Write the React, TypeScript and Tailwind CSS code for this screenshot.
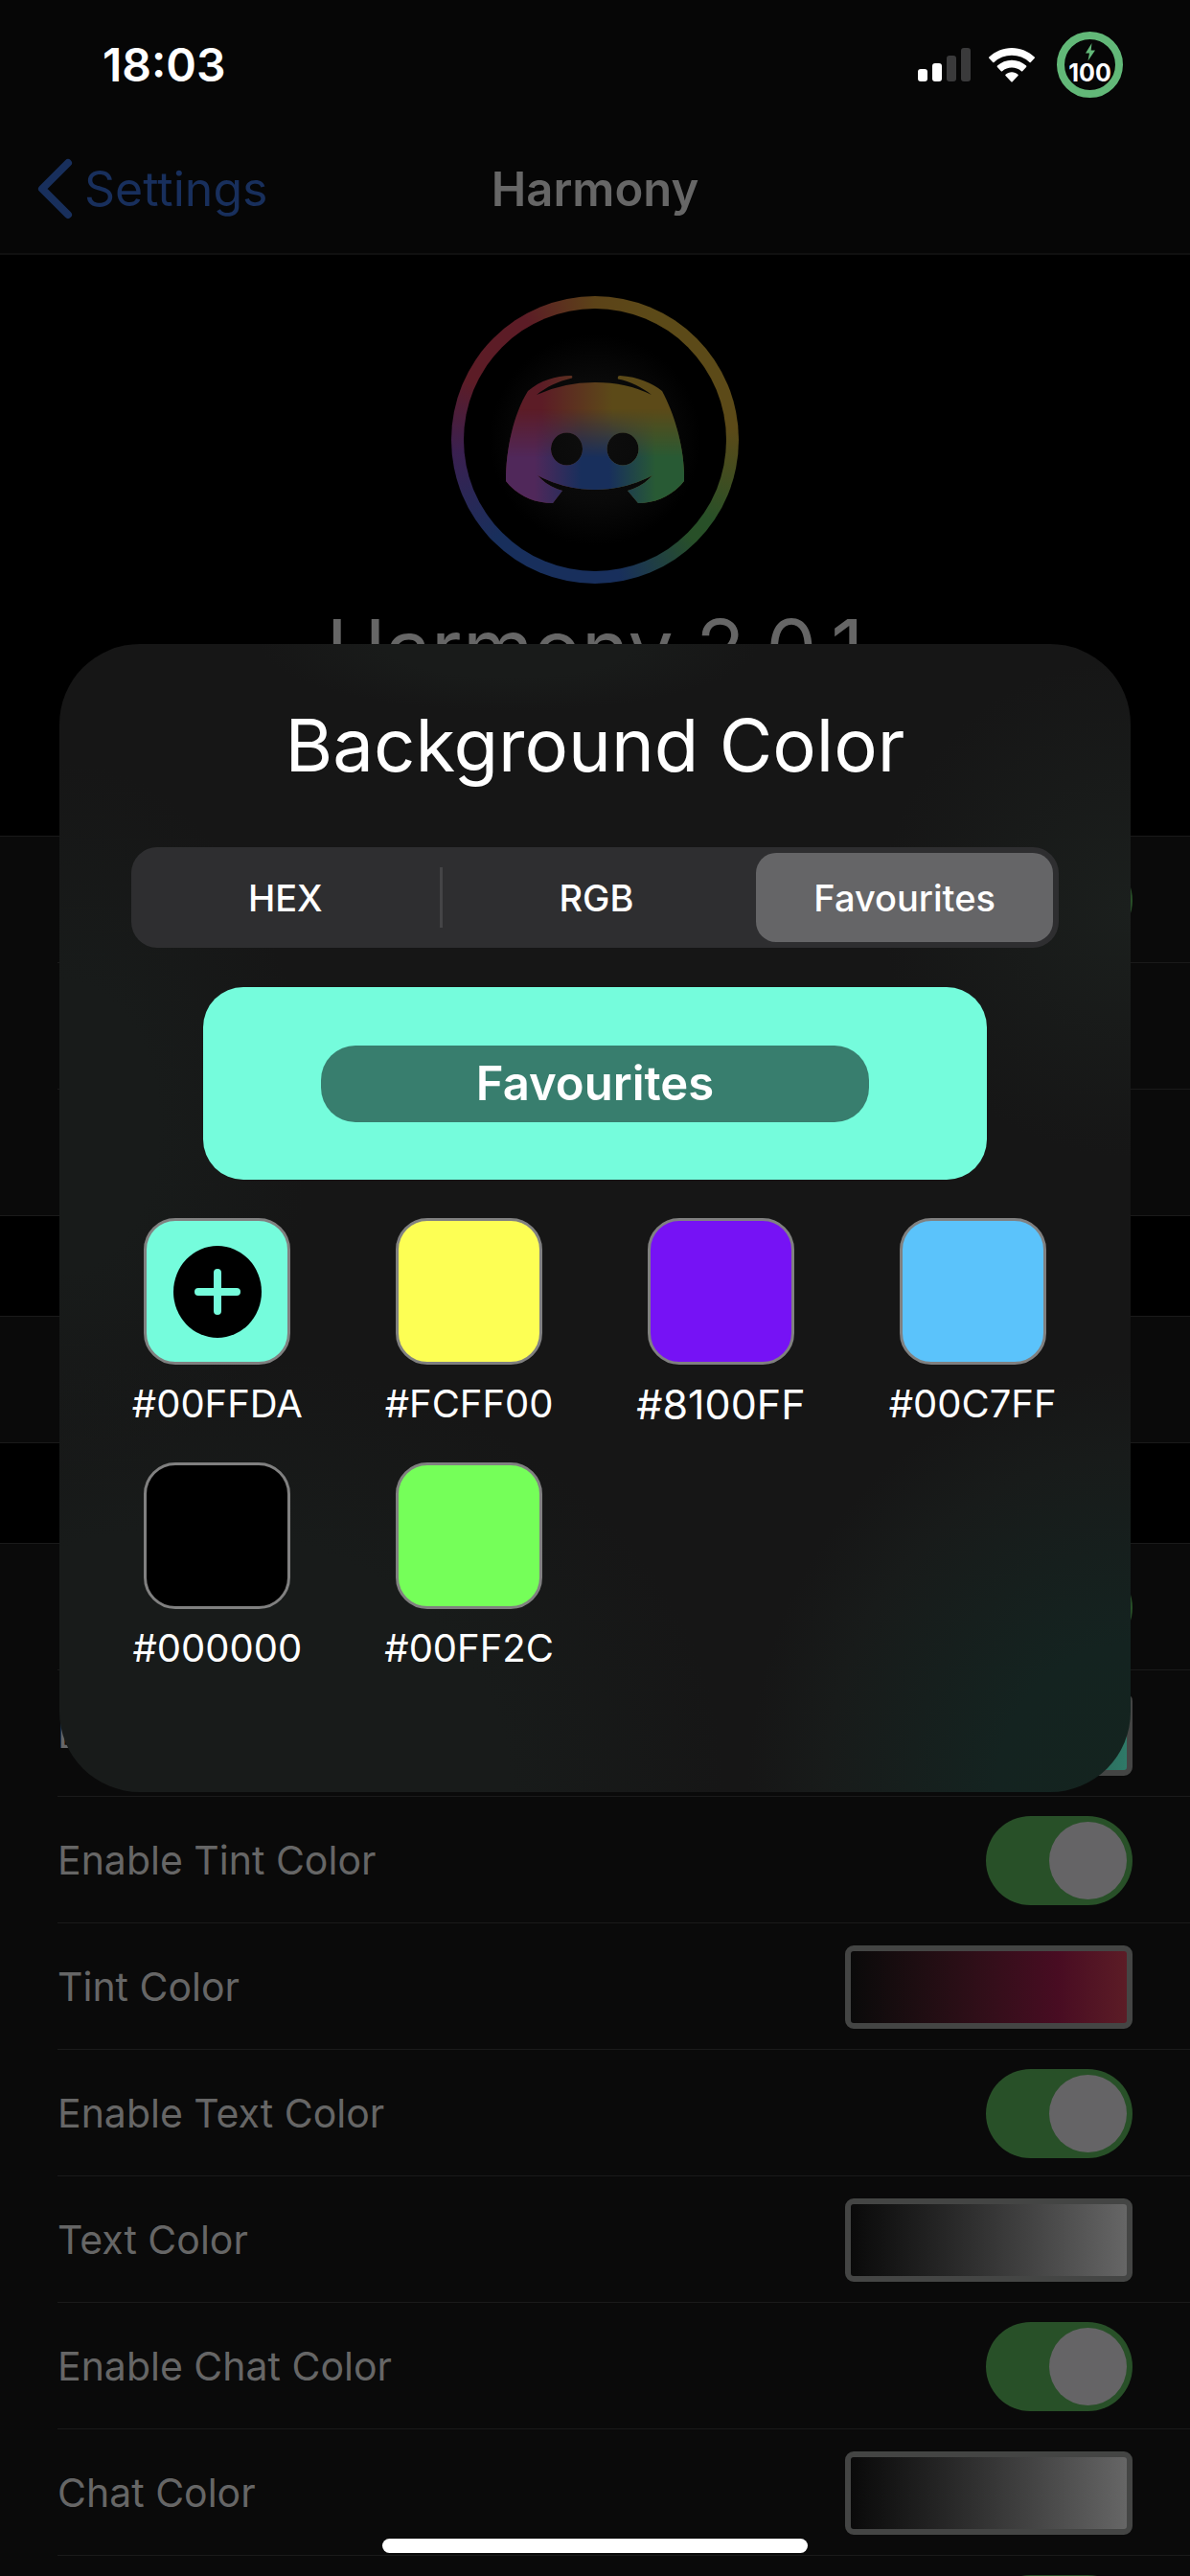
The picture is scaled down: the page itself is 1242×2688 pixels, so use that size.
import React from "react";

const ROW = "flex h-[132px] items-center justify-between pr-[60px]";

function Toggle({ label }: { label: string }) {
  return (
    <label className="relative ml-auto block h-[93px] w-[153px] shrink-0">
      <input
        type="checkbox"
        role="switch"
        aria-label={label}
        defaultChecked
        className="peer block h-full w-full appearance-none rounded-full bg-[#39393d] checked:bg-[#285028]"
      />
      <span className="pointer-events-none absolute left-1.5 top-1.5 size-[81px] rounded-full bg-[#656466] peer-checked:left-[66px]" />
    </label>
  );
}

function Well({ label, gradient }: { label: string; gradient: string }) {
  return (
    <button
      type="button"
      aria-label={label}
      className={"h-[87px] w-[300px] shrink-0 rounded-[9px] border-[6px] border-[#444544] bg-origin-padding " + gradient}
    />
  );
}

type RowData = { id: string; label?: string; gradient?: string; toggle?: boolean };

function Section({ rows }: { rows: RowData[] }) {
  return (
    <ul className="border-y border-[#1a1a1a] bg-[#0a0a0a] pl-[60px]">
      {rows.map((r, i) => (
        <li key={r.id} className={i < rows.length - 1 ? "border-b border-[#1a1a1a]" : ""}>
          <div className={"-mb-px " + ROW}>
            {r.label && <span className="text-[41px] leading-[52px] text-[#666]">{r.label}</span>}
            {r.gradient && <Well label={r.id} gradient={r.gradient} />}
            {r.toggle && <Toggle label={r.id} />}
          </div>
        </li>
      ))}
    </ul>
  );
}

const GREY = "bg-linear-to-r from-[#0a0a0a] to-[#666]";

const GROUPS: RowData[][] = [
  [{ id: "Enabled", toggle: true }, { id: "row-2" }, { id: "row-3" }],
  [{ id: "row-4" }],
  [
    { id: "Enable Background Color", toggle: true },
    { id: "Background Color", label: "Background Color", gradient: "bg-linear-to-r from-[#0a0a0a] to-[#2f7a68]" },
    { id: "Enable Tint Color", label: "Enable Tint Color", toggle: true },
    { id: "Tint Color", label: "Tint Color", gradient: "bg-linear-to-r from-[#0a0a0a] via-[#480c22] via-75% to-[#5c1c26]" },
    { id: "Enable Text Color", label: "Enable Text Color", toggle: true },
    { id: "Text Color", label: "Text Color", gradient: GREY },
    { id: "Enable Chat Color", label: "Enable Chat Color", toggle: true },
    { id: "Chat Color", label: "Chat Color", gradient: GREY },
    { id: "More colors", toggle: true },
  ],
];

function StatusBar() {
  return (
    <div className="absolute inset-x-0 top-0 flex h-[135px] items-center justify-between pl-[107px] pr-[70px]">
      <span className="text-[48px] font-semibold leading-[58px] text-white">18:03</span>
      <div className="flex items-center gap-[19px]">
        <svg width="55" height="36" viewBox="0 0 55 36" aria-label="Signal">
          <rect x="0" y="22" width="10" height="13" rx="3" fill="#fff" />
          <rect x="15" y="16" width="10" height="19" rx="3" fill="#fff" />
          <rect x="30" y="8" width="10" height="27" rx="3" fill="#3a3a3b" />
          <rect x="45" y="0" width="10" height="35" rx="3" fill="#3a3a3b" />
        </svg>
        <svg width="48" height="36" viewBox="0 0 48 36" fill="#fff" aria-label="Wi-Fi">
          <path d="M24 0C33 0 41.500 3.600 47.700 9.500Q48.300 10.200 47.700 10.800L43.800 15Q43.100 15.500 42.500 15A27 27 0 0 0 5.500 15Q4.900 15.500 4.200 15L.3 10.800Q-.3 10.200.3 9.500C6.500 3.600 15 0 24 0Z" />
          <path d="M24 12.800C29.800 12.800 35.100 15 39.100 18.600Q39.700 19.300 39.100 19.900L35.200 24.200Q34.500 24.700 33.900 24.200A15 15 0 0 0 14.100 24.200Q13.500 24.700 12.800 24.200L8.900 19.900Q8.300 19.300 8.900 18.600C12.900 15 18.200 12.800 24 12.800Z" />
          <path d="M24 25.300C26.500 25.300 28.700 26.200 30.500 27.800Q31.100 28.500 30.500 29.100L24.700 35.300Q24 35.900 23.300 35.300L17.500 29.100Q16.900 28.500 17.500 27.800C19.300 26.200 21.500 25.300 24 25.300Z" />
        </svg>
        <div className="ml-1 flex size-[69px] flex-col items-center rounded-full border-[8px] border-[#62b878] pt-1">
          <svg width="12" height="19" viewBox="0 0 12 19" fill="#62b878" className="shrink-0" aria-hidden="true">
            <path d="M7.500 0 1 10.500H5L3.500 18.500 11 7.500H6.700Z" />
          </svg>
          <span className="text-[25px] font-bold leading-6 text-white">100</span>
        </div>
      </div>
    </div>
  );
}

function Logo() {
  return (
    <div className="relative grid size-[300px] place-items-center">
      <div className="absolute inset-0 rounded-full bg-[conic-gradient(#5c4318_0deg,#5c4a18_25deg,#5c4a18_85deg,#285028_125deg,#285028_135deg,#182f5c_170deg,#182f5c_225deg,#3a2050_265deg,#5c1c26_295deg,#5c1c26_330deg,#5c4318_360deg)]" />
      <div className="absolute inset-[13px] rounded-full bg-black bg-[radial-gradient(circle_110px_at_50%_50%,#0e0e0e_0%,#090909_60%,#000_100%)]" />
      <svg width="186" height="134" viewBox="0 0 186 134" className="relative" aria-label="Harmony logo">
        <defs>
          <linearGradient id="top" x1="0" x2="1" y1="0" y2="0">
            <stop offset=".2" stopColor="#5c1c26" />
            <stop offset=".6" stopColor="#5c4a18" />
          </linearGradient>
          <linearGradient id="bottom" x1="0" x2="1" y1="0" y2="0">
            <stop offset=".16" stopColor="#50285a" />
            <stop offset=".42" stopColor="#182f5c" />
            <stop offset=".58" stopColor="#182f5c" />
            <stop offset=".84" stopColor="#285a34" />
          </linearGradient>
          <linearGradient id="fade" x1="0" x2="0" y1="0" y2="1">
            <stop offset=".26" stopColor="#000" />
            <stop offset=".64" stopColor="#fff" />
          </linearGradient>
          <mask id="lower">
            <rect width="186" height="134" fill="url(#fade)" />
          </mask>
          <clipPath id="face" clipPathUnits="userSpaceOnUse">
            <path
              clipRule="evenodd"
              d="M68 0Q70 0 69 2.500C54 6 42 12 32 20Q60 7 93 7T152 20C142 12 130 6 117 3.500Q116 0 119 0C138 1 153 8 163 16C176 40 187 77 186 110C175 124 158 133 138 133L127 120C138 117 147 111 153 104C134 114 114 119 93 119S52 114 33 104C39 111 48 117 59 120L49 133C28 133 11 124 0 110C0 77 8 40 23 16C36 5 52 0 68 0ZM63.500 59.500A16.500 17 0 1 0 63.500 93.500 16.500 17 0 1 0 63.500 59.500ZM122 59.500A16.500 17 0 1 0 122 93.500 16.500 17 0 1 0 122 59.500Z"
            />
          </clipPath>
        </defs>
        <g clipPath="url(#face)">
          <rect width="186" height="134" fill="url(#top)" />
          <rect width="186" height="134" fill="url(#bottom)" mask="url(#lower)" />
        </g>
      </svg>
    </div>
  );
}

type Swatch = { hex: string; bg: string; add?: boolean; large?: boolean };

const SWATCHES: Swatch[] = [
  { hex: "#00FFDA", bg: "bg-[#75fcdc]", add: true },
  { hex: "#FCFF00", bg: "bg-[#fdff54]" },
  { hex: "#8100FF", bg: "bg-[#7612f5]", large: true },
  { hex: "#00C7FF", bg: "bg-[#5bc3fb]" },
  { hex: "#000000", bg: "bg-black" },
  { hex: "#00FF2C", bg: "bg-[#75ff59]" },
];

function ColorDialog() {
  const [tab, setTab] = React.useState("Favourites");
  return (
    <section
      role="dialog"
      aria-labelledby="dialog-title"
      className="absolute inset-x-[62px] top-[672px] flex flex-col items-center rounded-[84px] bg-[#161616] bg-[radial-gradient(ellipse_400px_440px_at_100%_100%,#14241f_0%,#142320_35%,#181b1a_80%,transparent_100%),radial-gradient(circle_260px_at_100%_23%,#1b1f1d_0%,transparent_100%),radial-gradient(ellipse_560px_460px_at_12%_100%,#181b1a_60%,transparent_100%),radial-gradient(ellipse_260px_380px_at_0%_42%,#181b1a_40%,transparent_100%),radial-gradient(ellipse_260px_70px_at_42%_0%,#191b1a_50%,transparent_100%)] px-[75px] pb-[125px]"
    >
      <h2 id="dialog-title" className="mt-[55px] text-[76px] leading-[100px] text-white">
        Background Color
      </h2>
      <div role="tablist" className="mt-[57px] grid h-[105px] w-full grid-cols-[1fr_3px_1fr_1fr] rounded-[27px] bg-[#2e2e30]">
        {["HEX", "RGB", "Favourites"].map((name, i) => (
          <React.Fragment key={name}>
            {i === 1 && <span className="my-[21px] bg-[#444446]" />}
            <button
              type="button"
              role="tab"
              aria-selected={tab === name}
              onClick={() => setTab(name)}
              className="m-1.5 rounded-[21px] text-[38px] font-medium leading-[48px] text-white aria-selected:bg-[#656567]"
            >
              {name}
            </button>
          </React.Fragment>
        ))}
      </div>
      <div className="mt-[41px] grid h-[201px] w-[818px] max-w-full place-items-center rounded-[42px] bg-[#75fcdc]">
        <div className="grid h-20 w-[70%] place-items-center rounded-[36px] bg-[#387e6e]">
          <span className="text-[49px] font-semibold leading-[60px] text-white">Favourites</span>
        </div>
      </div>
      <ul className="mt-10 grid w-[1051px] max-w-none shrink-0 grid-cols-4 gap-y-9">
        {SWATCHES.map((s) => (
          <li key={s.hex} className="flex flex-col items-center">
            <button
              type="button"
              aria-label={s.add ? "Add to favourites" : s.hex}
              className={"grid size-[153px] place-items-center rounded-[33px] border-[3px] border-[#808080] " + s.bg}
            >
              {s.add && (
                <svg width="94" height="96" viewBox="0 0 94 96" aria-hidden="true">
                  <ellipse cx="47" cy="48" rx="46" ry="48" fill="#000" />
                  <path d="M47 28V68M27 48H67" stroke="#75fcdc" strokeWidth="8" strokeLinecap="round" />
                </svg>
              )}
            </button>
            <span className={(s.large ? "text-[43px]" : "text-[40px]") + " mt-4 leading-[50px] text-white"}>{s.hex}</span>
          </li>
        ))}
      </ul>
    </section>
  );
}

export default function App() {
  return (
    <main className="relative h-screen overflow-hidden bg-black font-['Inter',sans-serif]">
      <header className="grid h-[266px] grid-cols-3 items-end border-b-2 border-[#101010] bg-[#060606] pb-[35px]">
        <a href="#settings" className="flex items-center gap-3 pl-[38px] text-[50px] leading-[62px] text-[#182f5c]">
          <svg width="38" height="64" viewBox="0 0 38 64" fill="none" stroke="currentColor" strokeWidth="8" strokeLinecap="round" strokeLinejoin="round" aria-hidden="true">
            <path d="M33 5 6 32 33 59" />
          </svg>
          Settings
        </a>
        <h1 className="text-center text-[49px] font-semibold leading-[62px] text-[#666]">Harmony</h1>
      </header>
      <div className="flex h-[606px] flex-col items-center pt-[43px]">
        <Logo />
        <p className="mt-3 text-[84px] leading-[112px] text-[#666]">Harmony 2.0.1</p>
      </div>
      <div className="flex flex-col gap-[104px]">
        {GROUPS.map((rows) => (
          <Section key={rows[0].id} rows={rows} />
        ))}
      </div>
      <StatusBar />
      <ColorDialog />
      <div className="absolute bottom-6 left-1/2 h-[15px] w-[444px] -translate-x-1/2 rounded-full bg-white" />
    </main>
  );
}
